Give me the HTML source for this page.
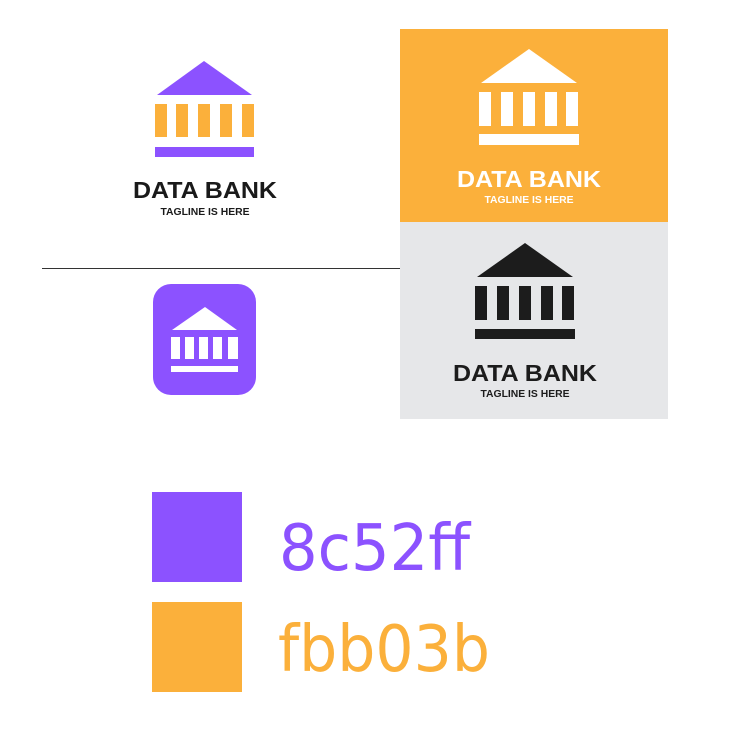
<!DOCTYPE html>
<html><head><meta charset="utf-8"><style>
html,body{margin:0;padding:0;background:#fff;width:744px;height:749px;overflow:hidden}
svg{display:block}
</style></head><body>
<svg width="744" height="749" viewBox="0 0 744 749" xmlns="http://www.w3.org/2000/svg">
<rect width="744" height="749" fill="#fff"/>
<polygon points="204,61 252,95 157,95" fill="#8c52ff"/>
<g fill="#fbb03b">
<rect x="155" y="104" width="12" height="33"/><rect x="176" y="104" width="12" height="33"/><rect x="198" y="104" width="12" height="33"/><rect x="220" y="104" width="12" height="33"/><rect x="242" y="104" width="12" height="33"/>
</g>
<rect x="155" y="147" width="99" height="10" fill="#8c52ff"/>
<text x="205" y="198" text-anchor="middle" font-family="Liberation Sans, sans-serif" font-weight="bold" font-size="23" fill="#1a1a1a" textLength="144" lengthAdjust="spacingAndGlyphs">DATA BANK</text>
<text x="205" y="215" text-anchor="middle" font-family="Liberation Sans, sans-serif" font-weight="bold" font-size="10" fill="#1a1a1a" textLength="89" lengthAdjust="spacingAndGlyphs">TAGLINE IS HERE</text>
<line x1="42" y1="268.5" x2="400" y2="268.5" stroke="#333" stroke-width="1"/>
<rect x="153" y="284" width="103" height="111" rx="18" fill="#8c52ff"/>
<g fill="#fff">
<polygon points="205,307 237,330 172,330"/>
<rect x="171" y="337" width="9" height="22"/><rect x="185" y="337" width="9" height="22"/><rect x="199" y="337" width="9" height="22"/><rect x="213" y="337" width="9" height="22"/><rect x="228" y="337" width="10" height="22"/>
<rect x="171" y="366" width="67" height="6"/>
</g>
<rect x="400" y="29" width="268" height="193" fill="#fbb03b"/>
<g fill="#fff">
<polygon points="529,49 577,83 481,83"/>
<rect x="479" y="92" width="12" height="34"/><rect x="501" y="92" width="12" height="34"/><rect x="523" y="92" width="12" height="34"/><rect x="545" y="92" width="12" height="34"/><rect x="566" y="92" width="12" height="34"/>
<rect x="479" y="134" width="100" height="11"/>
<text x="529" y="187" text-anchor="middle" font-family="Liberation Sans, sans-serif" font-weight="bold" font-size="23" textLength="144" lengthAdjust="spacingAndGlyphs">DATA BANK</text>
<text x="529" y="203" text-anchor="middle" font-family="Liberation Sans, sans-serif" font-weight="bold" font-size="10" textLength="89" lengthAdjust="spacingAndGlyphs">TAGLINE IS HERE</text>
</g>
<rect x="400" y="222" width="268" height="197" fill="#e6e7e9"/>
<g fill="#1c1c1c">
<polygon points="525,243 573,277 477,277"/>
<rect x="475" y="286" width="12" height="34"/><rect x="497" y="286" width="12" height="34"/><rect x="519" y="286" width="12" height="34"/><rect x="541" y="286" width="12" height="34"/><rect x="562" y="286" width="12" height="34"/>
<rect x="475" y="329" width="100" height="10"/>
<text x="525" y="381" text-anchor="middle" font-family="Liberation Sans, sans-serif" font-weight="bold" font-size="23" textLength="144" lengthAdjust="spacingAndGlyphs">DATA BANK</text>
<text x="525" y="397" text-anchor="middle" font-family="Liberation Sans, sans-serif" font-weight="bold" font-size="10" textLength="89" lengthAdjust="spacingAndGlyphs">TAGLINE IS HERE</text>
</g>
<rect x="152" y="492" width="90" height="90" fill="#8c52ff"/>
<rect x="152" y="602" width="90" height="90" fill="#fbb03b"/>
<text x="279" y="570" font-family="DejaVu Sans, sans-serif" font-size="64" fill="#8c52ff" textLength="191" lengthAdjust="spacingAndGlyphs">8c52ff</text>
<text x="278" y="671" font-family="DejaVu Sans, sans-serif" font-size="64" fill="#fbb03b" textLength="212" lengthAdjust="spacingAndGlyphs">fbb03b</text>
</svg>
</body></html>
